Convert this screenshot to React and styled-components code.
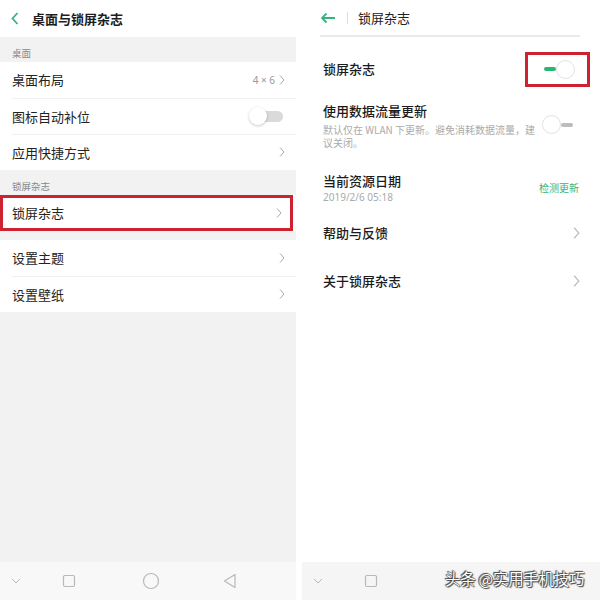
import styled, { createGlobalStyle } from "styled-components"

const GREEN = "#35b57b"
const RED = "#cd2331"

const Global = createGlobalStyle`
    html, body { margin: 0; padding: 0; background: #fff; }
    body { font-family: "Noto Sans CJK SC", "Noto Sans", sans-serif; }
`

const Page = styled.div`
    width: 600px;
    height: 600px;
    display: flex;
    justify-content: space-between;
    background: #fff;
    position: relative;
    overflow: hidden;
`

const LeftPanel = styled.section`
    width: 296px;
    height: 600px;
    display: flex;
    flex-direction: column;
    background: #f2f2f2;
`

const RightPanel = styled.section`
    width: 298px;
    height: 600px;
    display: flex;
    flex-direction: column;
    background: #fff;
`

const LeftHeader = styled.header`
    height: 37px;
    background: #fff;
    display: flex;
    align-items: center;
    padding-left: 11px;
    gap: 13px;
    font-size: 13px;
    font-weight: 700;
    color: #1e1e1e;
`

const SectionLabel = styled.div`
    height: 25px;
    box-sizing: border-box;
    padding: 9px 0 0 12px;
    font-size: 9.5px;
    color: #888;
    line-height: 14px;
`

const Group = styled.div`
    background: #fff;
    margin-top: ${p => p.$gap || 0}px;
`

const Row = styled.div`
    height: 36px;
    margin-left: ${p => (p.$boxed ? 0 : 12)}px;
    margin-right: ${p => (p.$boxed ? 3 : 0)}px;
    padding: 0 11px 1px ${p => (p.$boxed ? 12 : 0)}px;
    box-sizing: border-box;
    display: flex;
    align-items: center;
    justify-content: space-between;
    font-size: 13px;
    color: #222;
    border-top: ${p => (p.$divider ? "1px solid #f0f0f0" : "none")};
    box-shadow: ${p => (p.$boxed ? `inset 0 0 0 3px ${RED}` : "none")};
`

const Value = styled.span`
    display: flex;
    align-items: center;
    gap: 4px;
    font-size: 10px;
    color: #999;
    font-family: "Noto Sans", sans-serif;
`

const Filler = styled.div`
    flex: 1;
`

const NavBar = styled.nav`
    height: 38px;
    background: ${p => p.$bg};
    display: flex;
    align-items: center;
    padding-left: 10px;
`

const SmallSwitch = styled.div`
    width: 36px;
    height: 20px;
    position: relative;
    &::before {
        content: "";
        position: absolute;
        left: 7px;
        top: 5px;
        width: 27px;
        height: 11px;
        border-radius: 6px;
        background: #dadada;
    }
    &::after {
        content: "";
        position: absolute;
        left: 0;
        top: 1px;
        width: 18px;
        height: 18px;
        border-radius: 50%;
        background: #fff;
        box-shadow: 0 1px 3px rgba(0, 0, 0, 0.22);
    }
`

const RightHeader = styled.header`
    height: 35px;
    margin: 0 20px 0 18px;
    border-bottom: 2px solid #ebebeb;
    display: flex;
    align-items: center;
    font-size: 13px;
    color: #222;
`

const HeaderDivider = styled.span`
    width: 1px;
    height: 12px;
    background: #ddd;
    margin: 0 10px 0 11px;
`

const Item = styled.div`
    height: ${p => p.$h}px;
    margin: 0 20px 0 21px;
    display: flex;
    align-items: ${p => p.$align || "center"};
    justify-content: space-between;
    box-sizing: border-box;
    padding-top: ${p => p.$pt || 0}px;
`

const ItemText = styled.div`
    display: flex;
    flex-direction: column;
`

const Title = styled.div`
    font-size: 13px;
    font-weight: 500;
    color: #1b1b1b;
    line-height: 20px;
`

const Sub = styled.div`
    font-size: 10px;
    color: #aaa;
    line-height: 13px;
    width: ${p => (p.$w ? `${p.$w}px` : "auto")};
    margin-top: ${p => p.$mt || 0}px;
`

const Link = styled.span`
    font-size: 10px;
    color: ${GREEN};
    margin-right: 1px;
    white-space: nowrap;
    flex-shrink: 0;
`

const RedBox = styled.div`
    width: 65px;
    height: 35px;
    box-sizing: border-box;
    border: 3px solid ${RED};
    display: flex;
    align-items: center;
    justify-content: center;
    margin-right: -10px;
    padding-left: 4px;
`

const Toggle = styled.div`
    display: flex;
    align-items: center;
    flex-shrink: 0;
    flex-direction: ${p => (p.$on ? "row" : "row-reverse")};
    margin: ${p => (p.$on ? "0" : "14px 7px 0 0")};
`

const Bar = styled.span`
    width: 12px;
    height: 4px;
    border-radius: 2px;
    background: ${p => (p.$on ? "#27b86f" : "#bcbcbc")};
`

const Knob = styled.span`
    width: 19px;
    height: 19px;
    box-sizing: border-box;
    border-radius: 50%;
    border: 1px solid #e2e2e2;
    background: #fff;
`

const Watermark = styled.div`
    position: absolute;
    left: 445px;
    top: 567px;
    font-size: 15.5px;
    color: #fff;
    letter-spacing: -0.3px;
    text-shadow: 0 0 1px #333, 0 0 1px #333, 1px 1px 1px #444, -1px -1px 1px #444;
`

const Chevron = ({ size = 6, color = "#aaa" }) => (
    <svg width={size} height={size * 2} viewBox="0 0 6 12">
        <path d="M1 1.5 L5 6 L1 10.5" fill="none" stroke={color} strokeWidth="1" />
    </svg>
)

const NavIcons = ({ gap }) => (
    <>
        <svg width="12" height="8" viewBox="0 0 12 8">
            <path d="M2 2 L6 6 L10 2" fill="none" stroke="#b8b8b8" strokeWidth="1" />
        </svg>
        <svg width="14" height="14" viewBox="0 0 14 14" style={{ marginLeft: gap }}>
            <rect x="1.5" y="1.5" width="11" height="11" rx="1.5" fill="none" stroke="#b8b8b8" strokeWidth="1.2" />
        </svg>
    </>
)

function LeftScreen() {
    return (
        <LeftPanel>
            <LeftHeader>
                <svg width="8" height="13" viewBox="0 0 8 13">
                    <path d="M6.5 1 L1.5 6.5 L6.5 12" fill="none" stroke={GREEN} strokeWidth="1.8" />
                </svg>
                桌面与锁屏杂志
            </LeftHeader>
            <SectionLabel>桌面</SectionLabel>
            <Group>
                <Row>
                    桌面布局
                    <Value>4 × 6 <Chevron /></Value>
                </Row>
                <Row $divider>
                    图标自动补位
                    <SmallSwitch />
                </Row>
                <Row $divider>
                    应用快捷方式
                    <Chevron />
                </Row>
            </Group>
            <SectionLabel>锁屏杂志</SectionLabel>
            <Group>
                <Row $boxed>
                    锁屏杂志
                    <Chevron />
                </Row>
            </Group>
            <Group $gap={9}>
                <Row>
                    设置主题
                    <Chevron />
                </Row>
                <Row $divider>
                    设置壁纸
                    <Chevron />
                </Row>
            </Group>
            <Filler />
            <NavBar $bg="#f8f8f8">
                <NavIcons gap={40} />
                <svg width="18" height="18" viewBox="0 0 18 18" style={{ marginLeft: 66 }}>
                    <circle cx="9" cy="9" r="7.5" fill="none" stroke="#b8b8b8" strokeWidth="1.2" />
                </svg>
                <svg width="14" height="16" viewBox="0 0 14 16" style={{ marginLeft: 63 }}>
                    <path d="M12 1.5 L12 14.5 L1.5 8 Z" fill="none" stroke="#b8b8b8" strokeWidth="1.2" strokeLinejoin="round" />
                </svg>
            </NavBar>
        </LeftPanel>
    )
}

function RightScreen() {
    return (
        <RightPanel>
            <RightHeader>
                <svg width="16" height="12" viewBox="0 0 16 12">
                    <path d="M15 6 H2 M6.5 1.5 L2 6 L6.5 10.5" fill="none" stroke={GREEN} strokeWidth="1.8" />
                </svg>
                <HeaderDivider />
                锁屏杂志
            </RightHeader>
            <Item $h={64}>
                <Title>锁屏杂志</Title>
                <RedBox>
                    <Toggle $on>
                        <Bar $on />
                        <Knob />
                    </Toggle>
                </RedBox>
            </Item>
            <Item $h={59} $align="flex-start">
                <ItemText>
                    <Title>使用数据流量更新</Title>
                    <Sub $mt={2} $w={218}>默认仅在 WLAN 下更新。避免消耗数据流量，建议关闭。</Sub>
                </ItemText>
                <Toggle>
                    <Bar />
                    <Knob />
                </Toggle>
            </Item>
            <Item $h={48} $pt={6}>
                <ItemText>
                    <Title>当前资源日期</Title>
                    <Sub style={{ fontFamily: '"Noto Sans", sans-serif' }}>2019/2/6 05:18</Sub>
                </ItemText>
                <Link>检测更新</Link>
            </Item>
            <Item $h={49}>
                <Title>帮助与反馈</Title>
                <Chevron size={7} color="#bbb" />
            </Item>
            <Item $h={48}>
                <Title>关于锁屏杂志</Title>
                <Chevron size={7} color="#bbb" />
            </Item>
            <Filler />
            <NavBar $bg="#f5f5f5">
                <NavIcons gap={40} />
            </NavBar>
        </RightPanel>
    )
}

export default function App() {
    return (
        <Page>
            <Global />
            <LeftScreen />
            <RightScreen />
            <Watermark>头条 @实用手机技巧</Watermark>
        </Page>
    )
}
